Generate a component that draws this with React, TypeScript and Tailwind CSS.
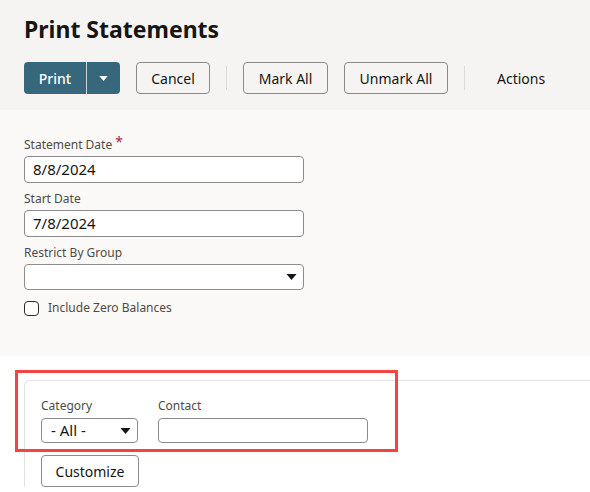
import React from "react";

/* ---------- small pieces ---------- */

function Caret({ className }: { className?: string }) {
  return (
    <svg width="10" height="6" viewBox="0 0 10 6" className={className} aria-hidden>
      <path d="M0 0h10L5 6z" fill="currentColor" />
    </svg>
  );
}

function OutlineButton({ label, width }: { label: string; width: string }) {
  return (
    <button
      className={`${width} h-[32px] rounded-[4px] border border-[#8b8b8b] bg-transparent text-[14px] text-[#161513] flex items-center justify-center`}
    >
      {label}
    </button>
  );
}

function Separator() {
  return <span className="mx-4 h-[24px] w-px bg-[#dcdbd9]" />;
}

function FieldLabel({ children }: { children: React.ReactNode }) {
  return <div className="text-[12px] leading-[16px] text-[#4f4a45]">{children}</div>;
}

/* ---------- page ---------- */

export default function App() {
  return (
    <div className="w-[590px] h-[492px] overflow-hidden bg-white font-['Noto_Sans',_'Liberation_Sans',_sans-serif] relative">
      {/* ===== header ===== */}
      <header className="h-[110px] bg-[#f5f4f2] px-6 pt-[14px]">
        <h1 className="text-[23px] leading-[30px] font-bold text-[#161513]">Print Statements</h1>
        <div className="mt-[18px] flex items-center">
          <div className="flex h-[32px] rounded-[4px] bg-[#36677b] text-white overflow-hidden">
            <button className="w-[62px] text-[14px] font-medium flex items-center justify-center">Print</button>
            <span className="w-px bg-[#c9d6dc]" />
            <button className="w-[33px] flex items-center justify-center">
              <Caret className="w-[9px] h-[5px]" />
            </button>
          </div>
          <div className="ml-4">
            <OutlineButton label="Cancel" width="w-[74px]" />
          </div>
          <Separator />
          <OutlineButton label="Mark All" width="w-[85px]" />
          <div className="ml-4">
            <OutlineButton label="Unmark All" width="w-[104px]" />
          </div>
          <Separator />
          <button className="h-[32px] pl-[16px] text-[14px] text-[#161513]">Actions</button>
        </div>
      </header>

      {/* ===== form ===== */}
      <section className="h-[246px] bg-[#faf9f8] px-6 pt-[27px]">
        <FieldLabel>
          Statement Date <span className="text-[#b0234a] text-[14px] leading-[10px] align-top">*</span>
        </FieldLabel>
        <div className="mt-[3px] w-[280px] h-[27px] rounded-[4px] border border-[#8b8b8b] bg-white px-2 flex items-center text-[15px] text-[#161513]">
          8/8/2024
        </div>

        <div className="mt-[8px]">
          <FieldLabel>Start Date</FieldLabel>
        </div>
        <div className="mt-[3px] w-[280px] h-[27px] rounded-[4px] border border-[#8b8b8b] bg-white px-2 flex items-center text-[15px] text-[#161513]">
          7/8/2024
        </div>

        <div className="mt-[8px]">
          <FieldLabel>Restrict By Group</FieldLabel>
        </div>
        <div className="mt-[3px] w-[280px] h-[26px] rounded-[4px] border border-[#8b8b8b] bg-white pr-[6px] flex items-center justify-end text-[#161513]">
          <Caret className="w-[11px] h-[6px]" />
        </div>

        <label className="mt-[10px] flex items-center gap-[9px]">
          <span className="w-[15px] h-[15px] rounded-[4px] border-[1.5px] border-[#2b2b2b] bg-white" />
          <span className="text-[12px] leading-[16px] text-[#4f4a45]">Include Zero Balances</span>
        </label>
      </section>

      {/* ===== search panel ===== */}
      <div className="mt-6 ml-6 border-t border-l border-[#e3e2e0] rounded-tl-[6px] pl-4 pt-[17px]">
        <div className="flex gap-[20px]">
          <div>
            <FieldLabel>Category</FieldLabel>
            <div className="mt-[4px] w-[97px] h-[25px] rounded-[4px] border border-[#8b8b8b] bg-white pl-[9px] pr-[6px] flex items-center justify-between text-[15px] text-[#161513]">
              <span>- All -</span>
              <Caret className="w-[11px] h-[6px]" />
            </div>
          </div>
          <div>
            <FieldLabel>Contact</FieldLabel>
            <div className="mt-[4px] w-[210px] h-[25px] rounded-[4px] border border-[#8b8b8b] bg-white" />
          </div>
        </div>
        <div className="mt-[12px]">
          <OutlineButton label="Customize" width="w-[98px]" />
        </div>
      </div>

      {/* annotation box over the panel */}
      <div className="absolute left-[15px] top-[370px] w-[383px] h-[82px] border-[3px] border-[#f44343]" />
    </div>
  );
}
